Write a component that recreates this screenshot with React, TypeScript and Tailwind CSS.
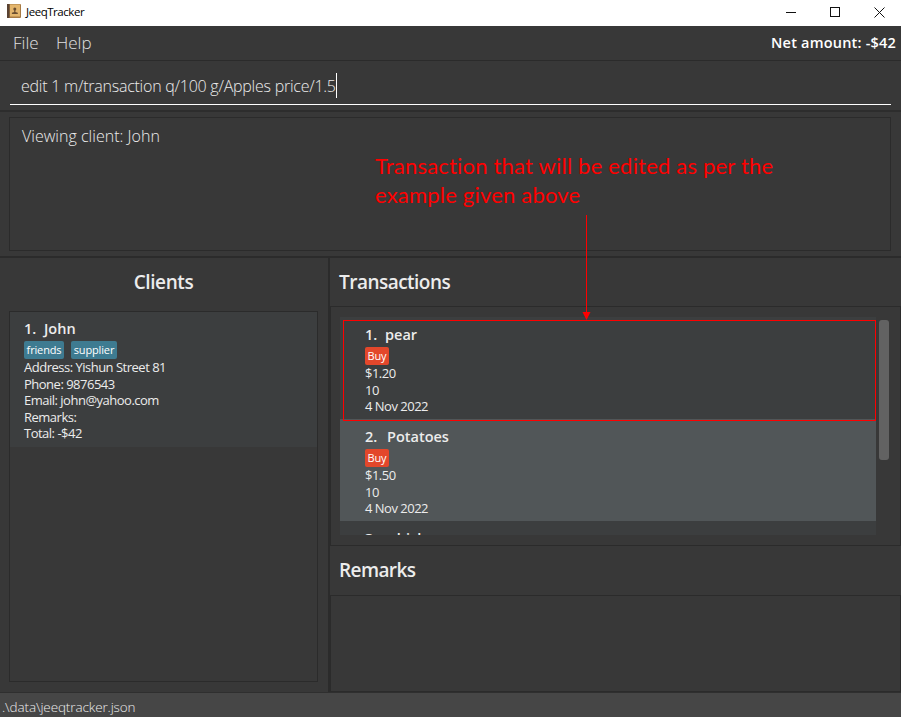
type CardProps = { title: string; index: string; indexClass?: string; tags: string[]; tagClass: string; lines: string[] };

function CardBody({ index, title, indexClass = "w-5", tags, tagClass, lines }: CardProps) {
  return (
    <>
      <div className="flex h-5 items-center whitespace-nowrap text-[14.5px] leading-5 font-semibold">
        <span className={`shrink-0 ${indexClass}`}>{index}</span>
        <span>{title}</span>
      </div>
      {tags.length > 0 && (
        <div className="mt-[2px] flex h-[18px] gap-[7px]">
          {tags.map((t) => (
            <span key={t} className={`flex h-[18px] items-center justify-center rounded-[2px] pb-px text-[11px] leading-none tracking-[-0.15px] text-white ${tagClass}`}>
              {t}
            </span>
          ))}
        </div>
      )}
      {lines.map((l) => (
        <div key={l} className="h-[16.6px] text-[13px] leading-[16.6px] tracking-[-0.5px] whitespace-nowrap">{l}</div>
      ))}
    </>
  );
}

function TitleBar() {
  return (
    <header className="flex h-[26px] shrink-0 items-center bg-white pl-[7px] text-black">
      <svg width="14" height="14" viewBox="0 0 14 14" className="mb-[4px]">
        <rect width="14" height="14" rx="1" fill="#a77a43" />
        <rect x="3" y="0.5" width="10" height="12" fill="#e3b56c" />
        <rect width="2.5" height="14" fill="#594333" />
        <circle cx="7.8" cy="5" r="1.5" fill="#6b4f31" />
        <path d="M7.2 6h1.2v2l2.4.8V10H4.9V8.8L7.2 8z" fill="#6b4f31" />
      </svg>
      <span className="mb-[3px] ml-[5px] text-[11.5px] tracking-[-0.45px]">JeeqTracker</span>
      <svg width="108" height="14" viewBox="0 0 108 14" className="mb-[3px] ml-auto mr-[10px]" fill="none" stroke="#111" strokeWidth="1">
        <path d="M3 7.5h10" />
        <rect x="47.5" y="2.5" width="9" height="9" />
        <path d="M91.5 2.5l10 10M101.5 2.5l-10 10" />
      </svg>
    </header>
  );
}

export default function App() {
  return (
    <div className="relative flex h-[717px] w-[901px] flex-col overflow-hidden bg-[#383838] font-['Open_Sans','Noto_Sans',sans-serif] text-[#ececec]">
      <TitleBar />
      <nav className="flex h-[35px] shrink-0 items-center border-b border-[#2b2b2b] pl-[13px] pr-[5px]">
        <span className="w-[43px] text-[17px] font-light text-[#e0e0e0]">File</span>
        <span className="text-[17px] font-light text-[#e0e0e0]">Help</span>
        <span className="ml-auto text-[14.5px] font-semibold tracking-[0.2px] text-white">Net amount: -$42</span>
      </nav>
      <div className="h-[51px] shrink-0 border-b-2 border-[#2d2d2d] px-[10px]">
        <div className="flex h-[44px] w-[881px] items-center border-b border-white pl-[11px] pt-[6px]">
          <span className="text-[16px] font-light tracking-[-0.24px] whitespace-nowrap">edit 1 m/transaction q/100 g/Apples price/1.5</span>
          <span className="h-[25px] w-px bg-white" />
        </div>
      </div>
      <div className="h-[146px] shrink-0 border-b-2 border-[#2b2b2b] px-[9px] pt-[5px]">
        <div className="h-[134px] w-[882px] border border-[#2b2b2b] pl-[12px] pt-[6px] text-[16px] leading-6 font-light tracking-[0.03px]">Viewing client: John</div>
      </div>
      <main className="flex h-[434px] shrink-0">
        <section className="w-[330px] shrink-0 border-r-2 border-[#2b2b2b] pl-[9px]">
          <h2 className="flex h-[53px] w-[309px] items-center justify-center pb-[4px] text-[19px] font-semibold tracking-[-0.4px]">Clients</h2>
          <div className="h-[371px] w-[309px] border border-[#2b2b2b]">
            <div className="h-[135px] bg-[#3c3e3f] pl-[14px] pt-[7px]">
              <CardBody
                index="1."
                title="John"
                tags={["friends", "supplier"]}
                tagClass="bg-[#3e7b91] first:w-10 last:w-[46px]"
                lines={["Address: Yishun Street 81", "Phone: 9876543", "Email: john@yahoo.com", "Remarks:", "Total: -$42"]}
              />
            </div>
          </div>
        </section>
        <section className="flex w-[571px] flex-col">
          <h2 className="flex h-[48px] items-center pl-[9px] text-[19px] font-semibold tracking-[-0.52px]">Transactions</h2>
          <div className="flex h-[240px] border border-[#2b2b2b] pl-[9px] pt-[10px]">
            <div className="h-[218px] w-[536px] overflow-hidden">
              <div className="h-[102px] bg-[#3c3e3f] pl-[25px] pt-[8px]">
                <CardBody index="1." title="pear" tags={["Buy"]} tagClass="bg-[#e3472b] w-6" lines={["$1.20", "10", "4 Nov 2022"]} />
              </div>
              <div className="h-[102px] bg-[#515658] pl-[25px] pt-[8px]">
                <CardBody index="2." indexClass="w-[22px]" title="Potatoes" tags={["Buy"]} tagClass="bg-[#e3472b] w-6" lines={["$1.50", "10", "4 Nov 2022"]} />
              </div>
              <div className="h-[102px] bg-[#3c3e3f] pl-[25px] pt-[8px]">
                <CardBody index="3." title="whisky" tags={[]} tagClass="" lines={[]} />
              </div>
            </div>
            <div className="mt-[3px] ml-[3px] h-[140px] w-[10px] rounded-[3px] bg-[#626262]" />
          </div>
          <h2 className="flex h-[49px] items-center pl-[9px] text-[19px] font-semibold tracking-[-0.6px]">Remarks</h2>
          <div className="h-[97px] border border-[#2b2b2b]" />
        </section>
      </main>
      <footer className="flex h-[25px] items-center border-t border-[#2f2f2f] bg-[#464646] pl-[2px] pt-[4px] text-[13.5px] font-light tracking-[-0.12px]">.\data\jeeqtracker.json</footer>

      <p className="absolute left-[375px] top-[151px] font-['Lato',sans-serif] text-[22px] leading-[29px] tracking-[0.2px] whitespace-nowrap text-[#ff0000]">
        Transaction that will be edited as per the
        <br />
        example given above
      </p>
      <div className="absolute left-[343px] top-[320px] h-[101px] w-[533px] border border-[#ff0000]" />
      <svg className="absolute left-[582px] top-[215px]" width="9" height="105" viewBox="0 0 9 105">
        <path d="M4 0h1v97H4zM.5 97h8l-4 8z" fill="#ff0000" />
      </svg>
    </div>
  );
}
